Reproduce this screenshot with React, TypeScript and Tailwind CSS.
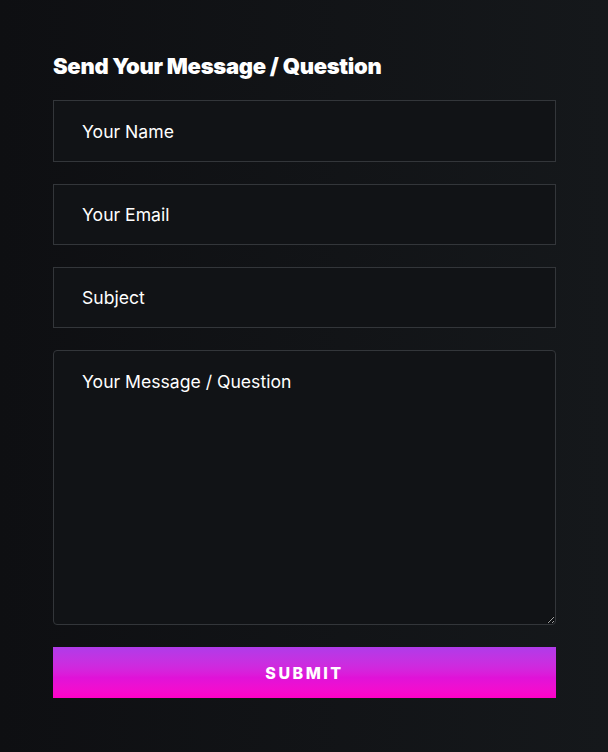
import React from "react";

export default function App() {
  return (
    <div className="min-h-[752px] w-full bg-gradient-to-r from-[#0e0f12] to-[#15181b] pt-[51px] pl-[53px] pr-[52px]" style={{ fontFamily: "Inter, 'Liberation Sans', sans-serif" }}>
      <h2 className="text-[22px] font-black text-white leading-[30px] tracking-[-0.3px]">
        Send Your Message / Question
      </h2>
      <form className="mt-[19px] flex flex-col gap-[22px]" onSubmit={(e) => e.preventDefault()}>
        <input
          placeholder="Your Name"
          className="h-[62px] w-full border border-[#33363a] bg-[#111316] px-[28px] text-[17.6px] text-white placeholder:text-white outline-none"
        />
        <input
          placeholder="Your Email"
          className="h-[61px] w-full border border-[#33363a] bg-[#111316] px-[28px] text-[17.6px] text-white placeholder:text-white outline-none"
        />
        <input
          placeholder="Subject"
          className="h-[61px] w-full border border-[#33363a] bg-[#111316] px-[28px] text-[17.6px] text-white placeholder:text-white outline-none"
        />
        <textarea
          placeholder="Your Message / Question"
          className="h-[275px] w-full rounded-[4px] border border-[#33363a] bg-[#111316] px-[28px] pt-[18px] text-[17.6px] text-white placeholder:text-white outline-none"
        />
        <button
          type="submit"
          className="h-[51px] w-full bg-gradient-to-b from-[#b03be9] via-[#e012d8] via-60% to-[#ff00c8] text-[16px] font-extrabold tracking-[2.5px] text-white"
        >
          SUBMIT
        </button>
      </form>
    </div>
  );
}
